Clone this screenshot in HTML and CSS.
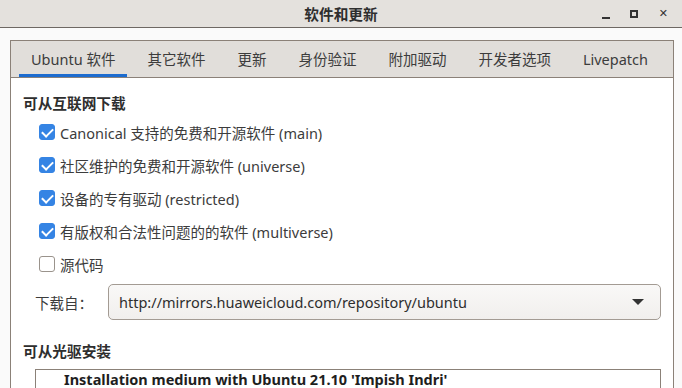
FILE: index.html
```html
<!DOCTYPE html>
<html lang="zh-CN">
<head>
    <meta charset="UTF-8">
    <title>软件和更新</title>
    <link rel="stylesheet" href="styles.css">
</head>
<body>
    <div class="window">
        <div class="titlebar">
            <span class="title">软件和更新</span>
            <div class="controls">
                <span class="ctl-min"></span>
                <span class="ctl-max"></span>
                <span class="ctl-close">✕</span>
            </div>
        </div>

        <div class="body">
            <div class="notebook">
                <div class="tabs">
                    <div class="tab active">Ubuntu 软件</div>
                    <div class="tab">其它软件</div>
                    <div class="tab">更新</div>
                    <div class="tab">身份验证</div>
                    <div class="tab">附加驱动</div>
                    <div class="tab">开发者选项</div>
                    <div class="tab">Livepatch</div>
                </div>

                <div class="page">
                    <h2 class="section">可从互联网下载</h2>
                    <div class="checks">
                        <label class="check"><span class="box on"></span>Canonical 支持的免费和开源软件 (main)</label>
                        <label class="check"><span class="box on"></span>社区维护的免费和开源软件 (universe)</label>
                        <label class="check"><span class="box on"></span>设备的专有驱动 (restricted)</label>
                        <label class="check"><span class="box on"></span>有版权和合法性问题的的软件 (multiverse)</label>
                        <label class="check"><span class="box"></span>源代码</label>
                    </div>

                    <div class="source-row">
                        <span class="source-label">下载自：</span>
                        <div class="combo">
                            <span>http://mirrors.huaweicloud.com/repository/ubuntu</span>
                            <span class="arrow"></span>
                        </div>
                    </div>

                    <h2 class="section second">可从光驱安装</h2>
                    <div class="cdlist">
                        <div class="cditem">Installation medium with Ubuntu 21.10 'Impish Indri'</div>
                    </div>
                </div>
            </div>
        </div>
    </div>
</body>
</html>
```
FILE: styles.css
```css
* {
    box-sizing: border-box;
}
body {
    margin: 0;
    font-family: "Noto Sans", "Noto Sans CJK SC", sans-serif;
    font-size: 14.5px;
    color: #3c3c3c;
    background: #fafafa;
    overflow: hidden;
}
.window {
    width: 682px;
    height: 388px;
    display: flex;
    flex-direction: column;
    overflow: hidden;
}
.titlebar {
    height: 28px;
    flex: none;
    background: #e4e1dd;
    border-bottom: 1px solid #6e6863;
    display: flex;
    align-items: center;
    justify-content: center;
    position: relative;
}
.title {
    font-weight: bold;
    font-size: 14.67px;
    color: #2e2e2e;
}
.controls {
    position: absolute;
    right: 0;
    top: 0;
    height: 27px;
    display: flex;
    align-items: center;
}
.ctl-min {
    width: 8px;
    height: 2px;
    background: #333;
    margin: 8px 20px 0 0;
}
.ctl-max {
    width: 8px;
    height: 8px;
    border: 2px solid #333;
    margin-right: 21px;
}
.ctl-close {
    font-family: "DejaVu Sans", sans-serif;
    font-size: 11px;
    font-weight: bold;
    color: #333;
    margin-right: 14px;
}
.body {
    flex: 1;
    padding: 12px 8px 0 10px;
    min-height: 0;
}
.notebook {
    border: 1px solid #8b8178;
    border-bottom: none;
    height: 100%;
    background: #fff;
    display: flex;
    flex-direction: column;
    overflow: hidden;
}
.tabs {
    height: 37px;
    flex: none;
    background: #e1deda;
    border-bottom: 1px solid #8b8178;
    display: flex;
    padding-left: 4px;
}
.tab {
    padding: 0 12px;
    margin: 0 4px;
    display: flex;
    align-items: center;
    color: #3c3c3c;
    border-bottom: 3px solid transparent;
    padding-top: 2px;
}
.tab.active {
    border-bottom-color: #1c6ccf;
}
.page {
    padding: 0 12px 0 12px;
}
.section {
    font-size: 14.67px;
    font-weight: bold;
    margin: 15px 0 0;
    color: #2e2e2e;
    line-height: 20px;
}
.section.second {
    margin-top: 21px;
}
.checks {
    display: flex;
    flex-direction: column;
    gap: 13px;
    margin-top: 9px;
    padding-left: 16px;
}
.check {
    display: flex;
    align-items: center;
    height: 20px;
    gap: 5px;
}
.box {
    width: 16px;
    height: 16px;
    border-radius: 3px;
    border: 1px solid #9a938c;
    background: #fff;
    position: relative;
}
.box.on {
    background: #3584e4;
    border-color: #3584e4;
}
.box.on::after {
    content: "";
    position: absolute;
    left: 4px;
    top: 1px;
    width: 5px;
    height: 9px;
    border: solid #fff;
    border-width: 0 2.5px 2.5px 0;
    transform: rotate(45deg);
}
.source-row {
    display: flex;
    align-items: center;
    margin-top: 10px;
    padding-left: 12px;
}
.source-label {
    width: 73px;
}
.combo {
    flex: 1;
    height: 36px;
    border: 1px solid #a39b93;
    border-radius: 5px;
    background: linear-gradient(#f9f8f7, #f1efed);
    display: flex;
    align-items: center;
    justify-content: space-between;
    padding: 0 16px 0 10px;
    color: #2e2e2e;
}
.arrow {
    width: 0;
    height: 0;
    border-left: 6px solid transparent;
    border-right: 6px solid transparent;
    border-top: 6px solid #333;
}
.cdlist {
    margin: 8px 0 0 12px;
    border: 1px solid #8b8178;
    border-bottom: none;
    height: 21px;
}
.cditem {
    font-weight: bold;
    color: #1e1e1e;
    line-height: 19px;
    padding-left: 28px;
}
```
